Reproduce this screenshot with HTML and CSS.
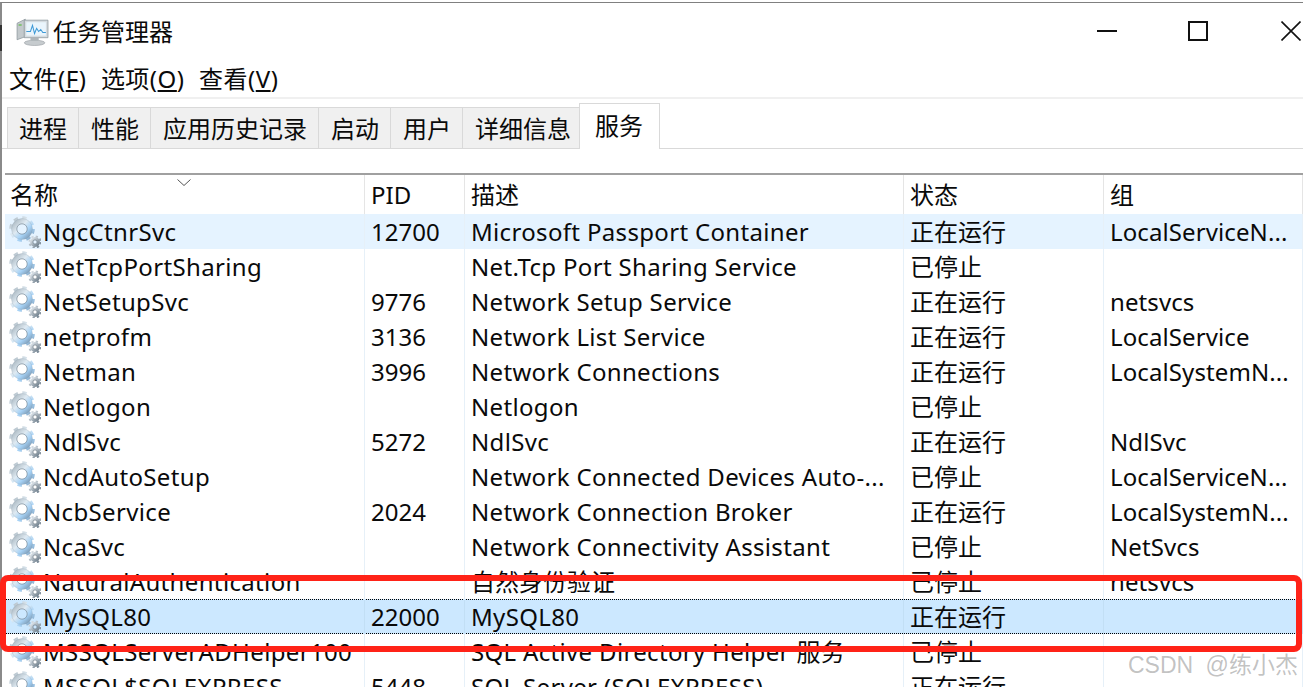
FILE: index.html
```html
<!DOCTYPE html>
<html lang="zh-CN">
<head>
<meta charset="utf-8">
<title>任务管理器</title>
<link rel="stylesheet" href="styles.css">
</head>
<body>
<svg class="defs" width="0" height="0" aria-hidden="true">
  <defs>
    <linearGradient id="gearGrad" x1="0" y1="0" x2="1" y2="1">
      <stop offset="0" stop-color="#aebbc4"/>
      <stop offset=".4" stop-color="#dfeaf2"/>
      <stop offset=".7" stop-color="#a6d2f6"/>
      <stop offset="1" stop-color="#7f9db8"/>
    </linearGradient>
    <linearGradient id="gearSmall" x1="0" y1="0" x2="1" y2="1">
      <stop offset="0" stop-color="#dfe6ec"/>
      <stop offset="1" stop-color="#6f7f8c"/>
    </linearGradient>
    <symbol id="gear" viewBox="0 0 32 32">
      <circle cx="13" cy="13" r="11" fill="none" stroke="url(#gearGrad)" stroke-width="3.6" stroke-dasharray="4.3 4.34"/>
      <circle cx="13" cy="13" r="7.8" fill="none" stroke="url(#gearGrad)" stroke-width="5.4"/>
      <circle cx="13" cy="13" r="5.2" fill="none" stroke="#7f8e9a" stroke-width=".9" opacity=".8"/>
      <circle cx="13" cy="13" r="10.5" fill="none" stroke="#8597a6" stroke-width=".5" opacity=".5"/>
      <circle cx="26" cy="26" r="5.6" fill="none" stroke="url(#gearSmall)" stroke-width="2" stroke-dasharray="2.2 2.2"/>
      <circle cx="26" cy="26" r="3.6" fill="none" stroke="url(#gearSmall)" stroke-width="2.6"/>
      <circle cx="26" cy="26" r="2.1" fill="none" stroke="#66747f" stroke-width=".7"/>
    </symbol>
  </defs>
</svg>
<div class="window">
  <header class="titlebar">
    <svg class="appicon" viewBox="0 0 32 28" aria-hidden="true">
      <path d="M1 6 9 2v17l-8 3z" fill="#c3c9cc" stroke="#7f8a90" stroke-width=".6"/>
      <rect x="2.500" y="7" width="3" height="1.400" fill="#6fbf5a"/>
      <path d="M8 3h23v17H8z" fill="#d6dce0" stroke="#858f95" stroke-width=".7"/>
      <rect x="10" y="5" width="19" height="13" fill="#eaf5fc"/>
      <path d="M10 14h4l2-6 2 8 2-5 2 3 2-2 2 3h3" fill="none" stroke="#3f9ad6" stroke-width="1"/>
      <ellipse cx="18" cy="25" rx="10" ry="2.600" fill="#c6cbce" stroke="#8a9196" stroke-width=".5"/>
      <rect x="14" y="20" width="8" height="3" fill="#aeb5b9"/>
    </svg>
    <span class="apptitle">任务管理器</span>
    <div class="controls">
      <span class="ctl-min"></span>
      <span class="ctl-max"></span>
      <svg class="ctl-close" viewBox="0 0 20 20" aria-hidden="true"><path d="M.5.5l19 19M19.500.5l-19 19" stroke="#111" stroke-width="1.600" fill="none"/></svg>
    </div>
  </header>
  <nav class="menubar">
    <span>文件(<u>F</u>)</span>
    <span>选项(<u>O</u>)</span>
    <span>查看(<u>V</u>)</span>
  </nav>
  <div class="tabs">
    <span class="tab tab-first">进程</span>
    <span class="tab">性能</span>
    <span class="tab">应用历史记录</span>
    <span class="tab">启动</span>
    <span class="tab">用户</span>
    <span class="tab">详细信息</span>
    <span class="tab tab-active">服务</span>
  </div>
  <div class="table">
    <div class="row head">
      <div class="cell c-name">名称<svg class="sort" viewBox="0 0 14 7" aria-hidden="true"><path d="M.5.5 7 6.500 13.500.5" fill="none" stroke="#555" stroke-width="1"/></svg></div>
      <div class="cell">PID</div>
      <div class="cell">描述</div>
      <div class="cell">状态</div>
      <div class="cell">组</div>
    </div>
    <div class="row hover">
      <div class="cell c-name"><svg class="gear"><use href="#gear"/></svg>NgcCtnrSvc</div><div class="cell">12700</div><div class="cell c-desc">Microsoft Passport Container</div><div class="cell">正在运行</div><div class="cell c-group">LocalServiceN...</div>
    </div>
    <div class="row">
      <div class="cell c-name"><svg class="gear"><use href="#gear"/></svg>NetTcpPortSharing</div><div class="cell"></div><div class="cell c-desc">Net.Tcp Port Sharing Service</div><div class="cell">已停止</div><div class="cell"></div>
    </div>
    <div class="row">
      <div class="cell c-name"><svg class="gear"><use href="#gear"/></svg>NetSetupSvc</div><div class="cell">9776</div><div class="cell c-desc">Network Setup Service</div><div class="cell">正在运行</div><div class="cell c-group">netsvcs</div>
    </div>
    <div class="row">
      <div class="cell c-name"><svg class="gear"><use href="#gear"/></svg>netprofm</div><div class="cell">3136</div><div class="cell c-desc">Network List Service</div><div class="cell">正在运行</div><div class="cell c-group">LocalService</div>
    </div>
    <div class="row">
      <div class="cell c-name"><svg class="gear"><use href="#gear"/></svg>Netman</div><div class="cell">3996</div><div class="cell c-desc">Network Connections</div><div class="cell">正在运行</div><div class="cell c-group">LocalSystemN...</div>
    </div>
    <div class="row">
      <div class="cell c-name"><svg class="gear"><use href="#gear"/></svg>Netlogon</div><div class="cell"></div><div class="cell c-desc">Netlogon</div><div class="cell">已停止</div><div class="cell"></div>
    </div>
    <div class="row">
      <div class="cell c-name"><svg class="gear"><use href="#gear"/></svg>NdlSvc</div><div class="cell">5272</div><div class="cell c-desc">NdlSvc</div><div class="cell">正在运行</div><div class="cell c-group">NdlSvc</div>
    </div>
    <div class="row">
      <div class="cell c-name"><svg class="gear"><use href="#gear"/></svg>NcdAutoSetup</div><div class="cell"></div><div class="cell c-desc">Network Connected Devices Auto-...</div><div class="cell">已停止</div><div class="cell c-group">LocalServiceN...</div>
    </div>
    <div class="row">
      <div class="cell c-name"><svg class="gear"><use href="#gear"/></svg>NcbService</div><div class="cell">2024</div><div class="cell c-desc">Network Connection Broker</div><div class="cell">正在运行</div><div class="cell c-group">LocalSystemN...</div>
    </div>
    <div class="row">
      <div class="cell c-name"><svg class="gear"><use href="#gear"/></svg>NcaSvc</div><div class="cell"></div><div class="cell c-desc">Network Connectivity Assistant</div><div class="cell">已停止</div><div class="cell c-group">NetSvcs</div>
    </div>
    <div class="row">
      <div class="cell c-name"><svg class="gear"><use href="#gear"/></svg>NaturalAuthentication</div><div class="cell"></div><div class="cell">自然身份验证</div><div class="cell">已停止</div><div class="cell c-group">netsvcs</div>
    </div>
    <div class="row selected">
      <div class="cell c-name"><svg class="gear"><use href="#gear"/></svg>MySQL80</div><div class="cell">22000</div><div class="cell c-desc">MySQL80</div><div class="cell">正在运行</div><div class="cell"></div>
    </div>
    <div class="row">
      <div class="cell c-name"><svg class="gear"><use href="#gear"/></svg>MSSQLServerADHelper100</div><div class="cell"></div><div class="cell c-desc">SQL Active Directory Helper 服务</div><div class="cell">已停止</div><div class="cell"></div>
    </div>
    <div class="row">
      <div class="cell c-name"><svg class="gear"><use href="#gear"/></svg>MSSQL$SQLEXPRESS</div><div class="cell">5448</div><div class="cell c-desc">SQL Server (SQLEXPRESS)</div><div class="cell">正在运行</div><div class="cell"></div>
    </div>
  </div>
</div>
<div class="edge"></div>
<div class="redbox"></div>
<div class="watermark">CSDN @练小杰</div>
</body>
</html>
```
FILE: styles.css
```css
* { box-sizing: border-box; }
html, body { margin: 0; height: 100%; background: #fff; overflow: hidden; }
body {
  position: relative;
  font-family: "Noto Sans", "Noto Sans CJK SC", sans-serif;
  font-size: 24px;
  color: #0a0a0a;
}
.defs { position: absolute; }
.window {
  margin-top: 2px;
  height: 685px;
  border-top: 1px solid #808080;
  border-left: 2px solid #8a8a8a;
  overflow: hidden;
  display: flex;
  flex-direction: column;
}
.edge {
  position: absolute;
  left: 0;
  top: 25px;
  width: 2px;
  height: 26px;
  background: #333;
}
.titlebar {
  height: 57px;
  flex: none;
  display: flex;
  align-items: center;
  padding-left: 14px;
}
.appicon { width: 33px; height: 29px; margin-right: 4px; }
.apptitle { line-height: 57px; margin-top: -1px; }
.controls {
  margin-left: auto;
  display: flex;
  align-items: center;
  gap: 71px;
  padding-right: 2px;
  margin-top: -2px;
}
.ctl-min { width: 20px; height: 2px; background: #111; }
.ctl-max { width: 20px; height: 20px; border: 2px solid #111; }
.ctl-close { width: 20px; height: 20px; margin-left: 2px; }
.menubar {
  height: 37px;
  flex: none;
  display: flex;
  gap: 14.5px;
  padding: 0 0 2px 7px;
  align-items: center;
  white-space: nowrap;
  letter-spacing: .5px;
}
.tabs {
  height: 52px;
  flex: none;
  border-top: 2px solid #f0f0f0;
  padding: 4px 0 0 5px;
  display: flex;
  align-items: flex-end;
  position: relative;
}
.tabs::after {
  content: "";
  position: absolute;
  left: 0; right: 0; bottom: 0;
  height: 1px;
  background: #d9d9d9;
}
.tab {
  height: 41px;
  margin-bottom: 1px;
  padding: 0 11px 2px 12px;
  background: #f0f0f0;
  border: 1px solid #d9d9d9;
  border-width: 1px 1px 0 0;
  display: flex;
  align-items: center;
  white-space: nowrap;
}
.tab-first { border-left-width: 1px; padding-left: 11px; }
.tab-active {
  position: relative;
  z-index: 1;
  height: 46px;
  margin: 0 0 0 -4px;
  padding: 0 16px 4px 15px;
  background: #fff;
  border-width: 1px 1px 0 1px;
}
.table {
  margin-top: 24px;
  margin-left: 3px;
  border-top: 2px solid #a0a0a0;
  flex: none;
}
.row {
  display: grid;
  grid-template-columns: 360px 100px 439px 200px 199px;
  height: 35px;
}
.row.head { height: 39px; }
.cell {
  position: relative;
  padding-left: 6px;
  border-right: 1px solid #e6f0f8;
  display: flex;
  align-items: center;
  white-space: nowrap;
  overflow: hidden;
  line-height: 35px;
}
.head .cell { border-right-color: #e5e5e5; line-height: 37px; }
.cell.c-name { overflow: visible; padding-left: 4px; letter-spacing: .35px; }
.head .cell.c-name { padding-left: 5px; letter-spacing: 0; }
.c-desc { letter-spacing: .33px; }
.c-group { letter-spacing: .1px; }
.sort { position: absolute; left: 172px; top: 4px; width: 14px; height: 7px; }
.gear { width: 32px; height: 32px; flex: none; margin-right: 2px; }
.hover { background: #e5f3ff; }
.selected { background: #cce8ff; outline: 1px dotted #000; outline-offset: -1px; }
.selected .cell { border-right-color: #c2dff5; }
.redbox {
  position: absolute;
  left: 0;
  top: 575px;
  width: 1302px;
  height: 77px;
  border: 6px solid #ff2318;
  border-radius: 8px;
}
.watermark {
  position: absolute;
  left: 1128px;
  top: 650px;
  font-family: "Liberation Sans", "Noto Sans CJK SC", sans-serif;
  font-size: 23px;
  line-height: 30px;
  word-spacing: 6px;
  color: rgba(120, 120, 120, .45);
  white-space: nowrap;
}
```
